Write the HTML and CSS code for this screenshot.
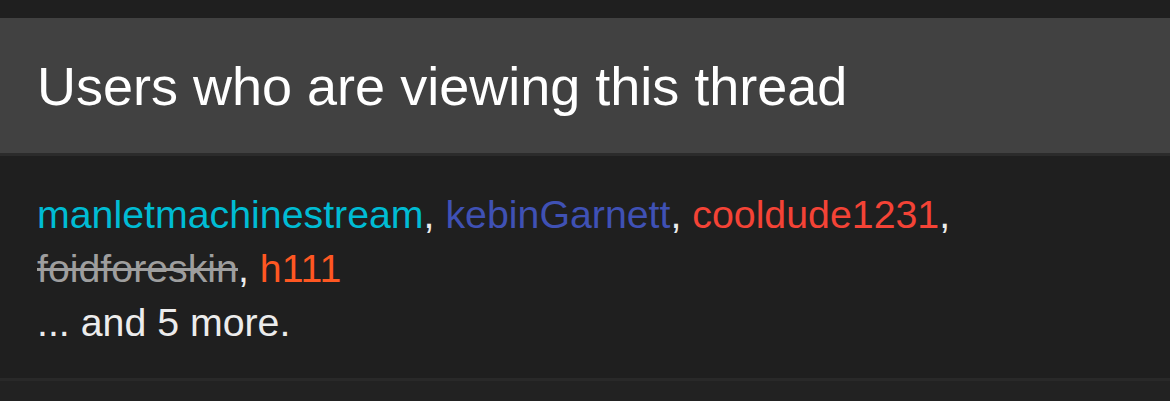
FILE: index.html
```html
<!DOCTYPE html>
<html>
<head>
<meta charset="utf-8">
<link rel="stylesheet" href="styles.css">
</head>
<body>
<div class="page">
  <section class="block">
    <h3 class="block-header">Users who are viewing this thread</h3>
    <div class="block-body">
      <ul class="user-list">
        <li><a class="u u-cyan">manletmachinestream</a>, </li>
        <li><a class="u u-indigo">kebinGarnett</a>, </li>
        <li><a class="u u-red">cooldude1231</a>, </li>
        <li><a class="u u-banned">foidforeskin</a>, </li>
        <li><a class="u u-orange">h111</a></li>
      </ul>
      <div class="more">... and 5 more.</div>
    </div>
  </section>
</div>
</body>
</html>
```
FILE: styles.css
```css
html, body {
  margin: 0;
  padding: 0;
  background: #222222;
}
body {
  font-family: "Liberation Sans", Arial, Helvetica, sans-serif;
  color: #ececec;
}
.page {
  padding-top: 18px;
  background: #1f1f1f;
}
.block {
  background: #1f1f1f;
  border-bottom: 3px solid #292929;
}
.block-header {
  margin: 0;
  background: #414141;
  color: #ffffff;
  font-weight: normal;
  font-size: 54px;
  line-height: 62px;
  padding: 37px 37px 36px;
  border-bottom: 3px solid #2b2b2b;
}
.block-body {
  padding: 31px 37px 29px;
  font-size: 39.3px;
  line-height: 54px;
}
.user-list {
  list-style: none;
  margin: 0;
  padding: 0;
}
.user-list li {
  display: inline;
}
.u { text-decoration: none; }
.u-cyan { color: #00bcd4; }
.u-indigo { color: #3f51b5; }
.u-red { color: #f44336; }
.u-orange { color: #ff5722; }
.u-banned {
  color: #9e9e9e;
  text-decoration: line-through;
}
.more {
  color: #ececec;
}
```
